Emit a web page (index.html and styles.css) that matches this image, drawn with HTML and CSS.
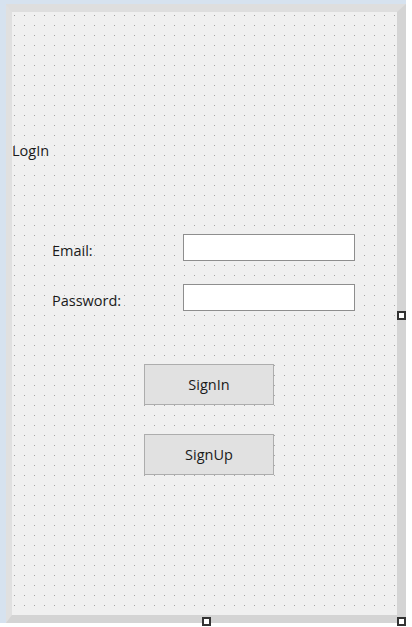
FILE: index.html
```html
<!DOCTYPE html>
<html lang="en">
<head>
<meta charset="utf-8">
<title>LogIn - Designer</title>
<link rel="stylesheet" href="styles.css">
</head>
<body>
<div class="shell">
  <div class="frame">
    <div class="form">
      <div class="title">LogIn</div>
      <div class="field-row first">
        <label class="field-label">Email:</label>
        <div class="textbox"></div>
      </div>
      <div class="field-row">
        <label class="field-label">Password:</label>
        <div class="textbox"></div>
      </div>
      <div class="btn signin">SignIn</div>
      <div class="btn signup">SignUp</div>
    </div>
    <span class="handle handle-right"></span>
    <span class="handle handle-bottom"></span>
    <span class="handle handle-corner"></span>
  </div>
</div>
</body>
</html>
```
FILE: styles.css
```css
* { box-sizing: border-box; }
html, body {
  margin: 0;
  padding: 0;
  background: #ffffff;
}
body {
  width: 412px;
  height: 627px;
  overflow: hidden;
  font-family: "Open Sans", "Noto Sans", "Liberation Sans", sans-serif;
  color: #1a1a1a;
}
.shell {
  width: 406px;
  height: 623px;
  background: #d6e2ef;
  padding: 4px 0 0 6px;
}
.frame {
  position: relative;
  width: 400px;
  height: 619px;
  border-style: solid;
  border-width: 8px 9px 8px 6px;
  border-color: #dedede #d4d4d4 #d4d4d4 #e0e0e0;
}
.form {
  width: 385px;
  height: 603px;
  background-color: #f0f0f0;
  background-image: conic-gradient(at 1px 1px, rgba(0,0,0,0) 270deg, #a6a6a6 0);
  background-size: 10px 10px;
  background-position: 2px 3px;
  display: flex;
  flex-direction: column;
  align-items: flex-start;
  padding-top: 129px;
}
.title {
  font-size: 14.5px;
  line-height: 20px;
  height: 20px;
}
.field-row {
  display: flex;
  align-items: flex-start;
  height: 27px;
  padding-left: 40px;
  margin-top: 23px;
}
.field-row.first {
  margin-top: 73px;
}
.field-label {
  width: 131px;
  font-size: 14.5px;
  line-height: 20px;
  margin-top: 7px;
}
.textbox {
  width: 172px;
  height: 27px;
  background: #ffffff;
  border: 1px solid #8e8e8e;
}
.btn {
  width: 130px;
  height: 41px;
  margin-left: 132px;
  background: #e1e1e1;
  border: 1px solid #adadad;
  display: flex;
  align-items: center;
  justify-content: center;
  font-size: 14.5px;
  line-height: 20px;
}
.signin { margin-top: 53px; }
.signup { margin-top: 29px; }
.handle {
  position: absolute;
  width: 9px;
  height: 9px;
  background: #ffffff;
  border: 2px solid #333333;
}
.handle-right { left: 385px; top: 299px; }
.handle-bottom { left: 190px; top: 605px; }
.handle-corner { left: 385px; top: 605px; }
```
